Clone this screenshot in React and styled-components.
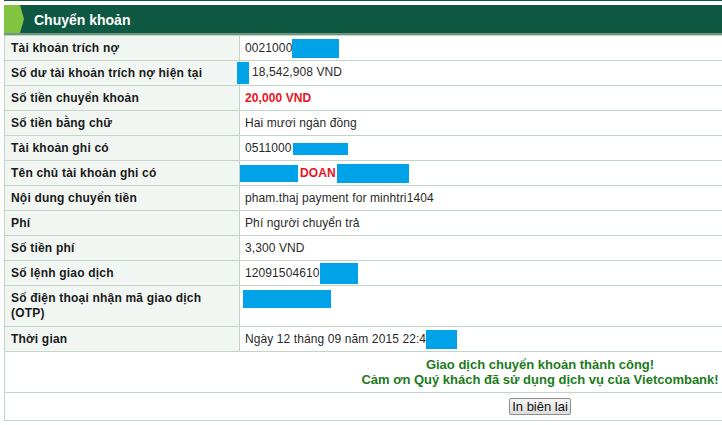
import styled, { createGlobalStyle } from "styled-components";

const GlobalStyle = createGlobalStyle`
  html, body {
    margin: 0;
    padding: 0;
    overflow: hidden;
    background: #fff;
  }
  body {
    font-family: "Liberation Sans", Arial, sans-serif;
  }
`;

const Page = styled.div`
  width: 1072px;
  padding-left: 4px;
`;

const TopLine = styled.div`
  height: 1px;
  background: #0f5a40;
  margin-bottom: 4px;
`;

const Header = styled.div`
  height: 28px;
  background: #0f5841;
  display: flex;
  align-items: center;
  border-bottom: 2px solid #6f9480;
`;

const Chevron = styled.svg`
  width: 20px;
  height: 28px;
  flex: none;
`;

const Title = styled.h2`
  margin: 0 0 0 10px;
  color: #fff;
  font-size: 14px;
  font-weight: 700;
  padding-top: 1px;
`;

const Table = styled.table`
  width: 100%;
  border-collapse: collapse;
  font-size: 12px;
  border: 1px solid #c3d5c6;
  td {
    border: 1px solid #c3d5c6;
  }
`;

const Row = styled.tr`
  height: ${(p) => (p.$tall ? "41px" : "25px")};
`;

const LabelCell = styled.td`
  width: 222px;
  padding: 0 6px;
  background: #f1f6f2;
  font-weight: 700;
  color: #1a1a1a;
  line-height: 15px;
  letter-spacing: 0.2px;
  vertical-align: middle;
`;

const ValueCell = styled.td`
  padding: 0 5px;
  color: #2a2a2a;
  white-space: nowrap;
  letter-spacing: 0.1px;
  vertical-align: middle;
`;

const Amount = styled.span`
  color: #e8141b;
  font-weight: 700;
`;

const Redact = styled.span`
  display: inline-block;
  vertical-align: middle;
  width: ${(p) => p.$w}px;
  height: ${(p) => p.$h}px;
  margin-left: ${(p) => p.$ml || 0}px;
  margin-right: ${(p) => p.$mr || 0}px;
  margin-bottom: ${(p) => p.$mb || 0}px;
  background: #00a2e8;
`;

const MessageCell = styled.td`
  height: 40px;
  padding: 0;
  text-align: center;
  font-size: 13px;
  font-weight: 700;
  line-height: 15px;
  color: #1b7a1b;
  vertical-align: middle;
`;

const ButtonCell = styled.td`
  height: 27px;
  padding: 0;
  text-align: center;
  vertical-align: middle;
`;

const PrintButton = styled.button`
  font-family: "Liberation Sans", Arial, sans-serif;
  font-size: 13px;
  color: #111;
  padding: 0 2px;
  height: 17px;
  line-height: 15px;
  border: 1px solid #8f8f8f;
  border-radius: 2px;
  background: linear-gradient(#f4f4f4, #dedede);
`;

function getRows() {
  return [
    { label: "Tài khoản trích nợ", value: <>0021000<Redact $w={47} $h={19} /></> },
    { label: "Số dư tài khoản trích nợ hiện tại", value: <><Redact $w={12} $h={22} $ml={-8} $mr={3} />18,542,908 VND</> },
    { label: "Số tiền chuyển khoản", value: <Amount>20,000 VND</Amount> },
    { label: "Số tiền bằng chữ", value: "Hai mươi ngàn đồng" },
    { label: "Tài khoản ghi có", value: <>0511000<Redact $w={55} $h={12} $ml={1} /></> },
    {
      label: "Tên chủ tài khoản ghi có",
      value: (
        <>
          <Redact $w={58} $h={17} $ml={-5} $mr={2} />
          <Amount>DOAN</Amount>
          <Redact $w={72} $h={19} $ml={1} />
        </>
      ),
    },
    { label: "Nội dung chuyển tiền", value: "pham.thaj payment for minhtri1404" },
    { label: "Phí", value: "Phí người chuyển trả" },
    { label: "Số tiền phí", value: "3,300 VND" },
    { label: "Số lệnh giao dịch", value: <>12091504610<Redact $w={38} $h={21} /></> },
    { label: "Số điện thoại nhận mã giao dịch (OTP)", value: <Redact $w={88} $h={18} $ml={-2} $mb={14} />, tall: true },
    { label: "Thời gian", value: <>Ngày 12 tháng 09 năm 2015 22:4<Redact $w={31} $h={19} /></> },
  ];
}

export default function App() {
  const rows = getRows();
  return (
    <>
      <GlobalStyle />
      <Page>
        <TopLine />
        <Header>
          <Chevron viewBox="0 0 20 28" preserveAspectRatio="none">
            <polygon points="0,0 16,0 20,14 16,28 0,28" fill="#82c341" />
          </Chevron>
          <Title>Chuyển khoản</Title>
        </Header>
        <Table>
          <tbody>
            {rows.map((row, i) => (
              <Row key={i} $tall={row.tall}>
                <LabelCell>{row.label}</LabelCell>
                <ValueCell>{row.value}</ValueCell>
              </Row>
            ))}
            <tr>
              <MessageCell colSpan={2}>
                Giao dịch chuyển khoản thành công!
                <br />
                Cảm ơn Quý khách đã sử dụng dịch vụ của Vietcombank!
              </MessageCell>
            </tr>
            <tr>
              <ButtonCell colSpan={2}>
                <PrintButton>In biên lai</PrintButton>
              </ButtonCell>
            </tr>
          </tbody>
        </Table>
      </Page>
    </>
  );
}
